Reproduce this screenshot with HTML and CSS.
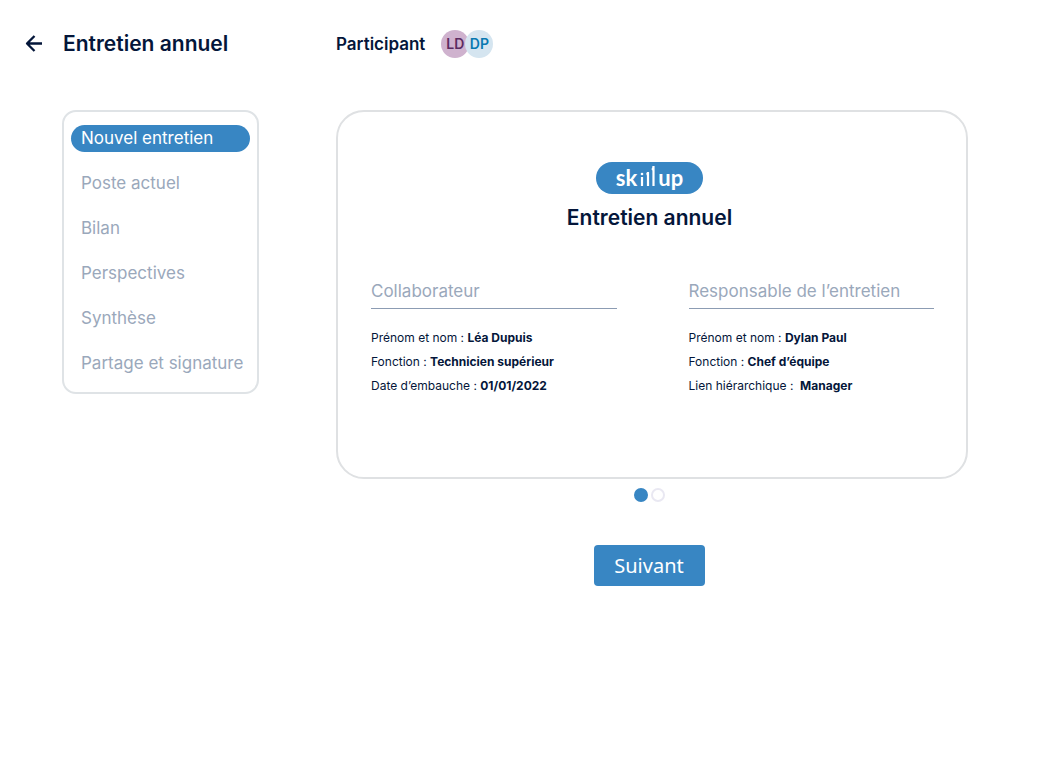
FILE: index.html
```html
<!DOCTYPE html>
<html lang="fr">
<head>
    <meta charset="UTF-8">
    <meta name="viewport" content="width=device-width, initial-scale=1.0">
    <title>Entretien annuel</title>
    <link rel="stylesheet" href="styles.css">
</head>
<body>

<header class="header">
    <div class="header-title">
        <a href="#" class="back" aria-label="Retour">
            <svg width="18" height="18" viewBox="0 0 18 18" fill="none" stroke="currentColor" stroke-width="2.300" stroke-linejoin="round">
                <path d="M17 8.500H2.500M9.500 1L2 8.500L9.500 16"/>
            </svg>
        </a>
        <h1>Entretien annuel</h1>
    </div>
    <div class="participants">
        <span class="participants-label">Participant</span>
        <span class="avatar avatar-ld">LD</span>
        <span class="avatar avatar-dp">DP</span>
    </div>
</header>

<div class="container">
    <nav class="menu">
        <a href="#" class="menu-item active">Nouvel entretien</a>
        <a href="#" class="menu-item">Poste actuel</a>
        <a href="#" class="menu-item">Bilan</a>
        <a href="#" class="menu-item">Perspectives</a>
        <a href="#" class="menu-item">Synthèse</a>
        <a href="#" class="menu-item">Partage et signature</a>
    </nav>

    <main class="content">
        <section class="card">
            <div class="logo">
                <span>sk</span>
                <!-- the "ill" drawn as rising bars -->
                <svg width="15" height="24" viewBox="0 0 15 24" fill="none" stroke="#fff" stroke-width="2.200">
                    <path d="M2 11V20M6.500 8.500Q8 8 8 6V20M12 4Q13.500 3 13.500 0V20"/>
                    <circle cx="2" cy="8" r="1.300" fill="#fff" stroke="none"/>
                </svg>
                <span>up</span>
            </div>
            <h2>Entretien annuel</h2>
            <div class="people">
                <div class="person">
                    <h3>Collaborateur</h3>
                    <p>Prénom et nom : <b>Léa Dupuis</b></p>
                    <p>Fonction : <b>Technicien supérieur</b></p>
                    <p>Date d’embauche : <b>01/01/2022</b></p>
                </div>
                <div class="person">
                    <h3>Responsable de l’entretien</h3>
                    <p>Prénom et nom : <b>Dylan Paul</b></p>
                    <p>Fonction : <b>Chef d’équipe</b></p>
                    <p>Lien hiérarchique :&nbsp; <b>Manager</b></p>
                </div>
            </div>
        </section>
        <div class="dots">
            <button type="button" class="dot dot-active" aria-label="Page 1"></button>
            <button type="button" class="dot" aria-label="Page 2"></button>
        </div>
        <button type="button" class="next">Suivant</button>
    </main>
</div>

</body>
</html>
```
FILE: styles.css
```css
* {
    box-sizing: border-box;
}
body {
    font-family: Inter, "Liberation Sans", sans-serif;
    background-color: #ffffff;
    color: #04163a;
    margin: 0;
    padding: 28px 74px 40px 62px;
}
h1, h2, h3, p {
    margin: 0;
}
h1, h2 {
    font-size: 21px;
    line-height: 30px;
    font-weight: 600;
}
.header {
    display: grid;
    grid-template-columns: 197px 1fr;
    column-gap: 77px;
    align-items: center;
}
.header-title {
    display: flex;
    align-items: center;
    gap: 20px;
    margin-left: -37px;
}
.back {
    display: flex;
    color: #04163a;
}
.participants {
    display: flex;
    align-items: center;
}
.participants-label {
    font-size: 17px;
    line-height: 32px;
    font-weight: 600;
    margin-right: 16px;
}
.avatar {
    width: 28px;
    height: 28px;
    border-radius: 50%;
    font-size: 14px;
    line-height: 28px;
    font-weight: 600;
    text-align: center;
}
.avatar-ld {
    background-color: #cfb2ce;
    color: #5b2b61;
}
.avatar-dp {
    background-color: #d5e5f0;
    color: #0878b0;
    margin-left: -4px;
}
.container {
    display: grid;
    grid-template-columns: 197px 1fr;
    column-gap: 77px;
    align-items: start;
    margin-top: 50px;
}
.menu {
    display: flex;
    flex-direction: column;
    gap: 18px;
    padding: 13px 7px 15px;
    border: 2px solid #dfe3e6;
    border-radius: 14px;
}
.menu-item {
    padding: 0 10px;
    font-size: 17px;
    line-height: 27px;
    color: #9aa8bb;
    text-decoration: none;
    white-space: nowrap;
    border-radius: 14px;
}
.menu-item.active {
    background-color: #3886c3;
    color: #ffffff;
}
.content {
    display: flex;
    flex-direction: column;
    align-items: center;
}
.card {
    display: flex;
    flex-direction: column;
    align-items: center;
    width: 100%;
    padding: 50px 32px 79px 33px;
    border: 2px solid #dfe1e3;
    border-radius: 28px;
}
.logo, h2, .dots, .next {
    margin-right: 6px;
}
.logo {
    display: flex;
    align-items: center;
    justify-content: center;
    gap: 3px;
    width: 107px;
    height: 32px;
    margin-bottom: 9px;
    background-color: #3886c3;
    border-radius: 16px;
    color: #ffffff;
    font-family: Lato, sans-serif;
    font-size: 22px;
    line-height: 32px;
    font-weight: 700;
}
.people {
    display: grid;
    grid-template-columns: 1fr 1fr;
    column-gap: 72px;
    width: 100%;
    margin-top: 45px;
}
.person h3 {
    font-size: 17px;
    line-height: 27px;
    font-weight: 400;
    color: #9aa8bb;
    padding-bottom: 3px;
    margin-bottom: 17px;
    border-bottom: 1px solid #8c9cb3;
}
.person p {
    font-size: 12px;
    line-height: 24px;
    white-space: nowrap;
}
.person b {
    font-weight: 700;
}
.dots {
    display: flex;
    gap: 3px;
    margin-top: 9px;
}
.dot {
    width: 14px;
    height: 14px;
    padding: 0;
    background-color: #ffffff;
    border: 2px solid #e9e8f2;
    border-radius: 50%;
    cursor: pointer;
}
.dot-active {
    background-color: #3886c3;
    border-color: #3886c3;
}
.next {
    width: 111px;
    height: 41px;
    margin-top: 43px;
    padding: 0;
    font-family: "Noto Sans", sans-serif;
    font-size: 20px;
    background-color: #3886c3;
    color: #ffffff;
    border: none;
    border-radius: 4px;
    cursor: pointer;
}
```
